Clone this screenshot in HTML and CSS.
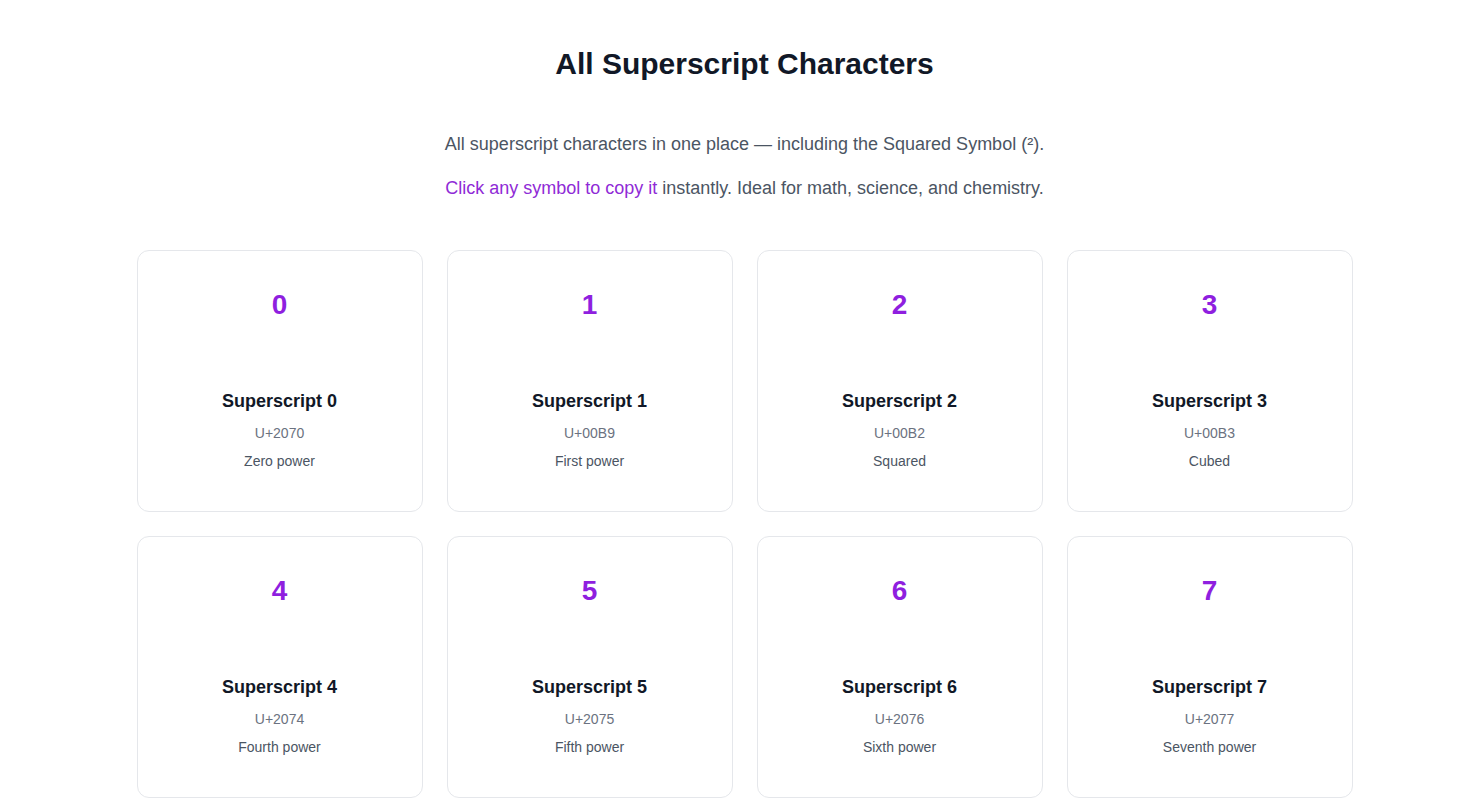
FILE: index.html
```html
<!DOCTYPE html>
<html lang="en">
<head>
<meta charset="utf-8">
<title>All Superscript Characters</title>
<link rel="stylesheet" href="styles.css">
</head>
<body>
<main class="page">
  <h1 class="title">All Superscript Characters</h1>
  <p class="lead">All superscript characters in one place — including the Squared Symbol (²).</p>
  <p class="lead"><span class="accent">Click any symbol to copy it</span> instantly. Ideal for math, science, and chemistry.</p>
  <section class="grid">
    <div class="card"><div class="sym">0</div><div class="name">Superscript 0</div><div class="code">U+2070</div><div class="desc">Zero power</div></div>
    <div class="card"><div class="sym">1</div><div class="name">Superscript 1</div><div class="code">U+00B9</div><div class="desc">First power</div></div>
    <div class="card"><div class="sym">2</div><div class="name">Superscript 2</div><div class="code">U+00B2</div><div class="desc">Squared</div></div>
    <div class="card"><div class="sym">3</div><div class="name">Superscript 3</div><div class="code">U+00B3</div><div class="desc">Cubed</div></div>
    <div class="card"><div class="sym">4</div><div class="name">Superscript 4</div><div class="code">U+2074</div><div class="desc">Fourth power</div></div>
    <div class="card"><div class="sym">5</div><div class="name">Superscript 5</div><div class="code">U+2075</div><div class="desc">Fifth power</div></div>
    <div class="card"><div class="sym">6</div><div class="name">Superscript 6</div><div class="code">U+2076</div><div class="desc">Sixth power</div></div>
    <div class="card"><div class="sym">7</div><div class="name">Superscript 7</div><div class="code">U+2077</div><div class="desc">Seventh power</div></div>
  </section>
</main>
</body>
</html>
```
FILE: styles.css
```css
html, body {
  margin: 0;
  padding: 0;
  background: #ffffff;
}
body {
  font-family: "Liberation Sans", Arial, sans-serif;
  color: #111827;
}
.page {
  width: 1216px;
  margin: 0 auto;
  padding: 44px 0 0 18px;
  text-align: center;
}
.title {
  margin: 0 0 48px;
  font-size: 30px;
  line-height: 40px;
  font-weight: 700;
  color: #111827;
}
.lead {
  margin: 0 0 20px;
  font-size: 18px;
  line-height: 24px;
  color: #4b5563;
}
.accent {
  color: #8f2bd6;
}
.grid {
  margin-top: 50px;
  display: grid;
  grid-template-columns: repeat(4, 286px);
  gap: 24px;
}
.card {
  box-sizing: border-box;
  height: 262px;
  border: 1px solid #e5e7eb;
  border-radius: 12px;
  padding: 20px 16px;
  display: flex;
  flex-direction: column;
  align-items: center;
}
.sym {
  box-sizing: border-box;
  height: 96px;
  padding-top: 16px;
  font-size: 28px;
  line-height: 36px;
  font-weight: 700;
  color: #8f1fdf;
}
.name {
  margin-top: 22px;
  font-size: 18px;
  line-height: 24px;
  font-weight: 700;
  color: #111827;
}
.code {
  margin-top: 10px;
  font-size: 14px;
  line-height: 20px;
  color: #6b7280;
}
.desc {
  margin-top: 8px;
  font-size: 14px;
  line-height: 20px;
  color: #4b5563;
}
```
